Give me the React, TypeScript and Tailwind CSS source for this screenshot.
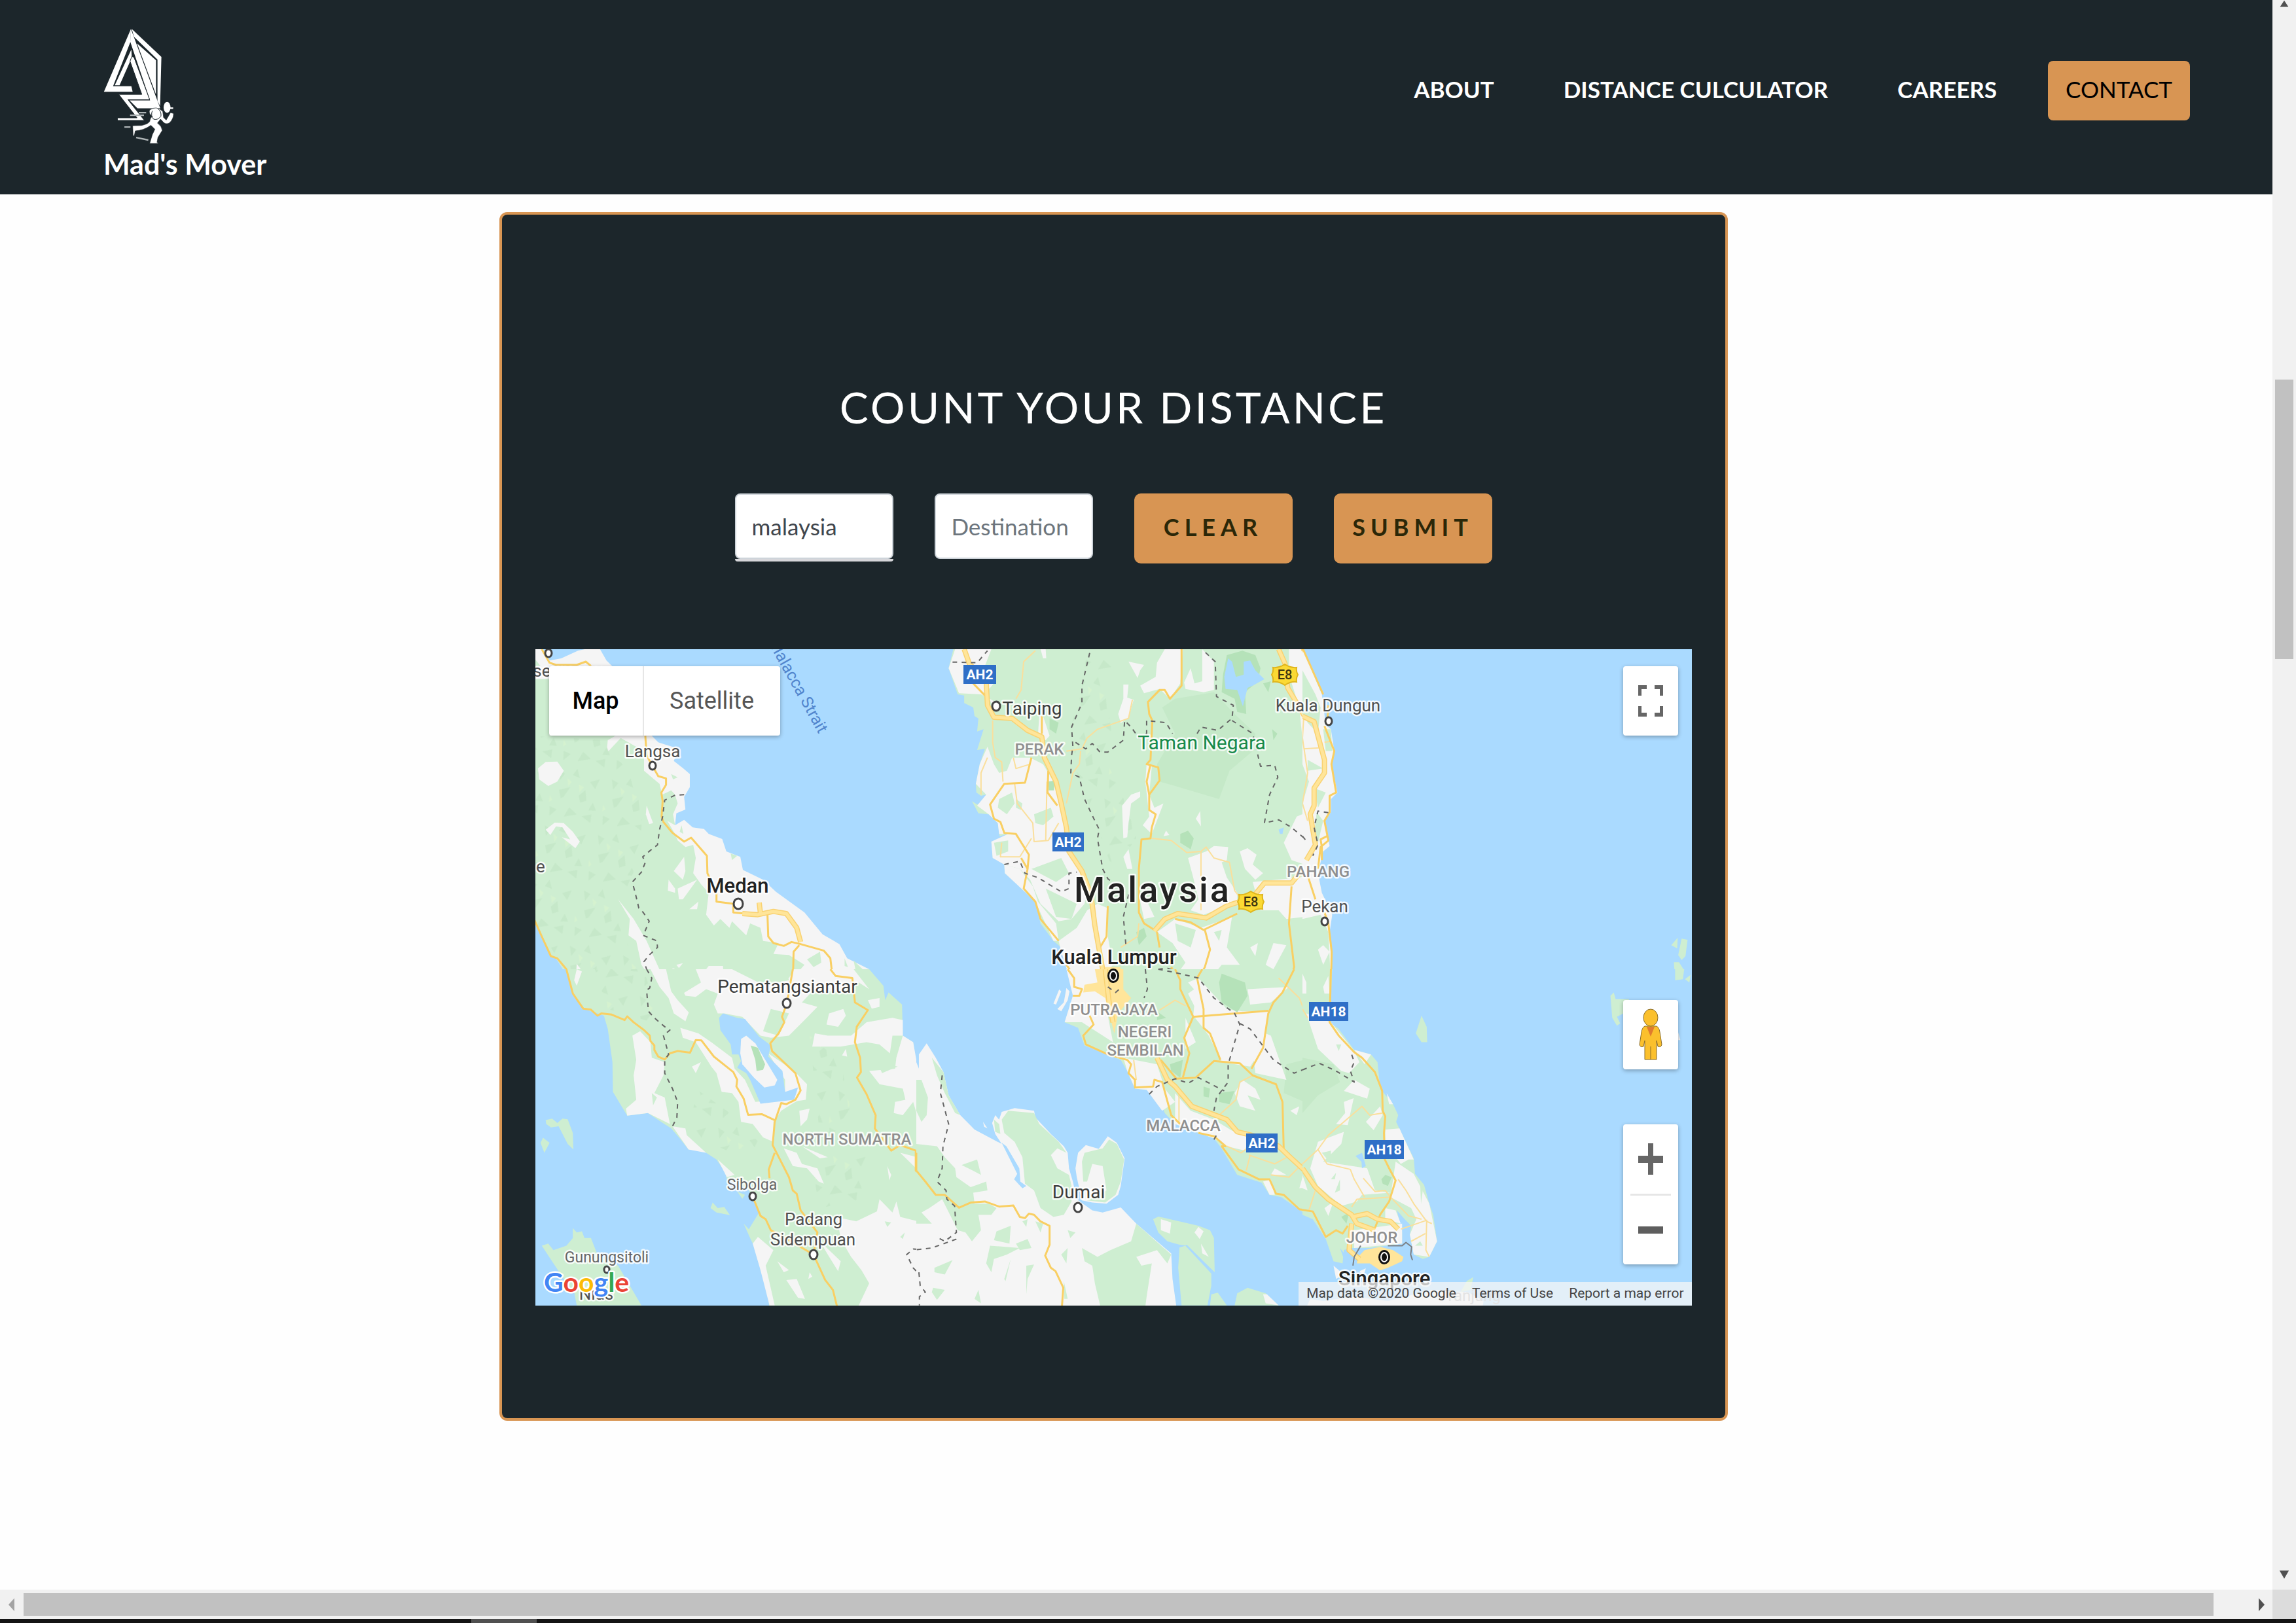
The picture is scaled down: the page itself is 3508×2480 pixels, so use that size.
import React from "react";

type Layer = [fill: string, shapes: string[]];

interface Sheet {
  x: number;
  y: number;
  height: number;
  span: number;
  layers: Layer[];
  minor: string[];
  roads: string[];
  motorways: string[];
  borders: string[];
  strait?: string[];
}

const LAND = "#f5f5f5";
const GREEN = "#ceeed1";
const SHADE = "#c5e9c8";
const FOREST = "#b5e2b9";
const WATER = "#aadaff";
const URBAN = "#ffe59a";
const RELIEF = "url(#relief)";

const sheets: Sheet[] = [
  {
    x: -8, y: -11, height: 520, span: 1560,
    layers: [
      [LAND, ["0,0 50,33 75,85 120,75 185,40 230,28 270,33 295,85 325,120 340,200 470,430 495,460 575,490 555,545 592,580 617,605 617,665 595,710 600,768 565,785 560,840 595,815 628,850 672,857 690,880 742,903 758,960 812,985 822,1045 900,1090 950,1145 1060,1240 1130,1340 1195,1385 1225,1450 1310,1500 1355,1568 165,1568 100,1450 80,1440 45,1350 0,1230"]],
      [GREEN, [
        "0,170 75,170 75,430 330,430 300,450 295,510 350,440 440,500 440,590 500,650 510,700 545,680 560,700 570,740 552,790 560,840 530,820 560,880 570,910 600,940 630,930 640,990 630,1060 660,1110 690,1150 680,1250 710,1300 735,1270 770,1310 780,1280 835,1345 850,1290 890,1310 900,1370 960,1380 940,1430 1000,1435 1060,1480 1030,1520 1000,1560 750,1560 745,1485 690,1485 660,1530 600,1520 550,1495 560,1568 165,1568 100,1450 80,1440 45,1350 0,1230",
        "20,80 40,110 20,110", "545,605 570,620 552,630", "585,840 592,880 578,870", "775,970 800,980 780,1000", "1070,1455 1120,1420 1125,1470 1095,1490", "1215,1450 1228,1490 1215,1485", "1250,1460 1285,1500 1260,1520", "1300,1530 1320,1510 1350,1568 1310,1568",
      ]],
      [RELIEF, ["0,430 290,450 440,700 420,1000 360,1160 300,1180 420,1500 160,1560 0,1240"]],
      [LAND, [
        "30,580 60,550 105,548 130,590 105,640 70,660 35,630", "60,860 95,828 130,830 165,870 192,915 175,945 122,895 155,905 125,850 100,845 78,885",
        "340,1180 400,1270 450,1370 525,1568 480,1568 430,1480 410,1370 380,1345 385,1270", "450,750 475,830 460,835 447,790",
        "555,1050 595,985 600,1050 590,1090", "535,1090 560,1130 560,1150 532,1140", "570,1130 645,1090 590,1180 575,1180", "615,1225 650,1190 645,1225", "180,1475 202,1510 190,1568 175,1568", "565,1480 590,1472 575,1495",
      ]],
    ],
    minor: [],
    roads: [
      "45,33 75,95 100,105 180,105 215,90 235,110",
      "445,430 450,520 472,567 495,615 525,625 525,655 507,690 512,730 508,800 515,825 550,875 595,915 622,897 683,980 685,1060 720,1150 720,1190 785,1200 785,1240 830,1245",
      "917,1250 920,1350 940,1380 980,1393 1010,1375 1045,1385 1135,1415 1160,1450 1165,1500 1200,1540 1245,1540",
      "1040,1390 1018,1420 1015,1568", "0,1230 45,1350 80,1440 105,1450 140,1500 165,1568",
    ],
    motorways: ["820,1245 880,1250 940,1235 990,1245 1030,1310 1045,1375", "885,1195 890,1245"],
    borders: ["595,700 560,702 520,725 512,800 500,860 492,930 465,955 435,985 445,1010 430,1055 395,1100 410,1170 420,1220 437,1240 460,1280 437,1345 490,1370 492,1400 460,1435 440,1465 450,1500 470,1560"],
  },
  {
    x: -8, y: 489, height: 530, span: 1568,
    layers: [
      [GREEN, [
        "140,0 1310,0 1365,75 1372,140 1385,105 1437,160 1440,300 1480,330 1490,420 1502,455 1502,385 1520,340 1545,345 1568,385 1568,1568 925,1568 920,1450 890,1360 885,1300 850,1215 825,1150 845,1175 882,1105 870,1050 840,990 760,950 755,920 720,860 680,830 640,812 612,815 575,760 545,720 455,650 375,662 320,555 318,420 300,270 285,210 210,180 165,110",
        "60,682 85,675 105,695 125,675 145,678 165,740 167,815 145,790 110,710 80,715 62,700", "40,785 50,762 75,785 55,830", "697,1080 705,1055 725,1080 750,1075 772,1112 720,1100", "800,1005 830,1020 820,1038",
        "165,1170 180,1190 200,1185 210,1215 235,1215 260,1290 340,1340 390,1440 430,1520 180,1520 170,1460 130,1400 90,1330 45,1250 70,1240 90,1270 140,1250 165,1215",
      ]],
      [RELIEF, ["250,0 440,0 500,250 300,180", "640,540 760,640 900,800 760,820 620,740", "1080,300 1200,420 1250,700 1120,760", "1080,850 1300,840 1280,1040 1120,1080"]],
      [LAND, [
        "180,0 200,10 180,75 170,50", "465,0 525,0 545,100 570,140 613,195 600,235 555,200 535,130 500,80",
        "550,0 600,120 640,125 680,90 725,110 710,160 725,200 750,200 820,215 890,300 930,310 1000,300 1060,230 1110,170 1050,150 1090,100 1200,100 1270,60 1310,90 1250,0 1020,0 1000,40 820,0 640,0",
        "395,300 425,280 465,330 470,400 520,420 515,480 480,560 520,580 540,700 455,650 375,662 370,630 410,590 400,480 410,410",
        "580,265 650,290 700,330 780,400 790,450 830,500 870,600 970,590 1040,590 1010,610 970,640 940,690 940,780 900,760 860,700 815,690 805,600 780,560 740,555 720,470 700,440 640,330 590,310",
        "920,380 1020,460 1070,520 1065,590 1010,600 985,560 985,500",
        "1090,350 1100,290 1150,300 1240,300 1300,240 1400,220 1440,230 1440,300 1400,300 1390,380 1350,340 1300,330 1200,350",
        "1145,250 1155,200 1210,180 1220,210 1190,260", "1305,140 1350,130 1350,170 1320,178",
        "1440,300 1480,330 1500,460 1568,560 1568,810 1520,810 1505,700 1480,600 1440,660 1405,650 1410,600 1450,590 1440,540 1350,520 1310,460 1410,450 1415,400",
        "1505,400 1530,340 1568,385 1568,440", "1040,640 1080,630 1070,680 1045,710", "980,810 1030,830 1050,880 1110,900 1135,970 1115,960 1070,900 1015,890", "1050,800 1150,850 1120,855", "1430,830 1530,860 1500,910", "1380,890 1395,930 1388,955",
        "1180,1120 1260,1140 1340,1095 1350,1040 1400,1100 1415,1050 1430,1120 1568,1160 1568,1568 1250,1568 1310,1420 1280,1360 1240,1300 1200,1220 1190,1150",
        "880,1210 940,1270 910,1340 945,1520 925,1520 890,1360 860,1240", "955,1320 1000,1360 980,1370", "990,1405 1030,1400 1062,1490 1035,1485", "1120,1230 1200,1320 1190,1365 1150,1290", "1080,1370 1090,1390 1075,1400",
        "725,860 790,930 760,940", "550,710 600,720 605,750 680,830 612,815", "625,440 660,420 640,470", "1205,390 1220,360 1225,395", "1500,1000 1568,1020 1568,1070",
      ]],
      [GREEN, ["545,0 640,0 660,60 590,110", "780,0 990,0 1000,50 900,70", "930,180 1000,200 960,300 900,280", "1430,1210 1448,1190 1440,1220", "1370,1140 1395,1145 1380,1165", "1340,420 1420,440 1360,470", "470,560 490,580 475,615"]],
      [WATER, ["730,220 745,200 800,220 830,225 885,305 930,345 920,395 975,460 985,555 1035,535 1020,590 890,608 850,500 835,470 800,445 815,415 805,385 780,385 775,340 735,275"]],
      [LAND, ["815,315 835,300 870,335 955,500 945,525 905,535 865,490 820,430 812,380"]],
      [FOREST, ["852,345 880,355 908,430 900,455 875,460 870,410"]],
    ],
    minor: [],
    roads: [
      "140,0 165,110 205,178 235,183 260,210 275,200 315,205 365,230 375,213 400,240 440,275 462,300 465,325 480,345 480,365 495,395 520,408 540,380 570,370 618,377 640,320 662,322 710,395 785,465 800,500 797,530 825,585 842,658 895,655 945,682",
      "1015,0 992,155 973,215 982,240 960,290 928,335 935,370 1025,470 1045,548 1025,590 990,610 970,605 945,690 937,795 1000,940 1015,1000 1030,1015 1045,1090 1110,1190 1095,1290 1140,1405 1170,1450 1195,1568",
      "945,830 922,905 925,945", "860,1028 890,1115 910,1130 930,1180 1000,1225 1095,1290",
      "1160,0 1180,30 1245,40 1255,150 1305,185 1262,260 1255,330 1275,400 1278,465 1263,490 1300,565 1335,660 1332,720 1395,820 1430,795 1490,820 1490,910 1525,950 1535,990 1568,1020",
    ],
    motorways: [],
    borders: [
      "450,0 470,40 462,85 450,95 457,190 480,220 520,260 540,275 515,300 535,385 520,410 520,470 550,540 570,600 567,670 545,722",
      "1568,1262 1530,1268 1480,1265 1455,1290 1480,1350 1500,1375 1505,1440 1525,1460 1505,1480 1508,1520",
    ],
  },
  {
    x: 582, y: -11, height: 520, span: 1560,
    layers: [
      [GREEN, ["150,0 125,120 160,240 185,245 185,280 220,300 225,340 240,350 235,410 260,400 235,495 265,490 245,560 230,650 232,690 250,705 270,700 265,735 235,745 215,730 240,785 280,790 315,830 322,890 355,880 310,915 290,915 295,985 340,1020 342,1060 410,1130 460,1190 480,1290 530,1370 560,1400 580,1480 600,1568 1568,1568 1568,240 1535,130 1480,0"]],
      [SHADE, ["950,300 1000,260 1150,230 1230,330 1310,420 1300,500 1210,590 1170,720 1000,660 940,640 930,560 1000,420"]],
      [RELIEF, ["560,40 660,40 640,200 600,380 620,600 700,850 760,1050 850,900 780,600 740,300 760,40"]],
      [LAND, [
        "150,33 290,33 265,110 310,105 300,190 270,230 290,280 330,290 250,240 165,235 125,120",
        "275,480 300,560 320,600 350,590 370,530 440,530 490,560 530,640 560,740 570,840 600,960 640,1030 660,1150 650,1200 600,1270 550,1280 480,1200 440,1090 400,1040 340,1020 295,990 290,915 355,880 320,880 315,830 280,790 235,750 270,700 230,650 245,560",
        "340,1020 400,1040 450,1120 470,1190 540,1290 550,1370 530,1370 460,1190 342,1060",
        "550,1370 620,1310 660,1230 700,1200 740,1220 740,1350 760,1480 700,1568 600,1568 560,1420",
        "475,340 490,340 515,430 500,450 470,430", "780,330 800,260 800,195 820,195 815,255 840,265 820,345 790,372", "820,90 880,105 865,130 855,165",
        "865,200 925,160 930,95 960,33 1030,33 1020,190 980,260 940,215 880,235", "1035,185 1060,120 1075,190 1105,180 1105,33 1150,90 1150,220 1110,230 1040,215",
        "795,750 830,700 865,685 865,710 830,740 820,830 815,895 800,900", "890,560 910,570 900,700 920,760 955,740 910,880 875,840 900,800 885,640", "1080,810 1097,775 1100,845", "955,890 965,865 978,885",
        "1050,990 1120,960 1150,935 1205,940 1200,1000 1180,1010 1200,1080 1240,1150 1240,1200 1180,1220 1110,1250 1060,1230 1090,1180 1070,1080",
        "1250,960 1280,945 1315,975 1300,1020 1340,1060 1310,1090 1270,1040", "1420,920 1470,800 1510,780 1530,850 1540,950 1500,1020 1450,1000",
        "1300,1100 1480,1080 1568,1050 1568,1250 1430,1270 1400,1230 1330,1230", "930,1330 1000,1270 1100,1310 1220,1260 1200,1400 1250,1480 1180,1480 1120,1568 980,1568 1040,1470 990,1380",
        "1290,1400 1320,1380 1310,1440", "1350,1480 1380,1380 1430,1390 1380,1500", "1440,33 1490,33 1568,260 1568,600 1520,650 1500,560 1490,420 1480,300 1440,150", "800,985 820,950 835,1040 815,1040", "480,33 500,33 502,75 490,75", "860,1160 880,1160 920,1260 880,1270",
      ]],
      [GREEN, ["320,720 370,690 380,740 350,790 315,760", "385,720 410,740 405,770 385,760", "455,790 520,760 530,800 490,840 460,830", "300,920 355,910 355,960 310,980", "445,1040 560,990 590,1060 540,1100", "1525,250 1560,300 1560,500 1520,480", "500,1130 620,1200 600,1270 540,1260", "1000,1290 1080,1320 1060,1400 1010,1370", "1150,1330 1180,1320 1170,1370"]],
      [FOREST, ["1200,60 1260,40 1310,60 1330,120 1320,180 1270,230 1275,330 1240,320 1230,260 1180,230 1185,150", "1020,880 1050,865 1072,900 1060,950 1020,920", "515,350 550,370 540,420 515,400", "1340,190 1370,180 1360,230", "1375,400 1395,420 1380,450", "850,1330 880,1310 890,1350 860,1390", "1170,1530 1210,1510 1220,1568 1170,1568", "510,640 535,635 532,680 512,680"]],
      [WATER, ["1205,75 1220,90 1235,160 1265,150 1265,90 1290,85 1310,130 1345,170 1300,200 1280,210 1262,295 1240,220 1195,215 1190,160", "1400,860 1420,850 1415,880 1405,880"]],
      [URBAN, ["690,1568 715,1490 790,1490 790,1568"]],
    ],
    minor: [
      "460,40 415,90 405,220 385,260", "835,265 820,350 700,400 660,440 640,490 580,500", "635,500 630,560 605,600 580,740", "295,360 295,460 305,530 330,550 335,640", "380,650 390,740 450,830 455,915 510,910 550,830", "275,530 250,600 250,700",
      "910,900 985,910 1045,965 1100,960 1120,940 1150,990 1210,1010 1230,1140 1250,1170", "1100,960 1100,1230", "860,1290 855,1350 790,1400", "330,920 325,985 400,985 445,900", "375,530 385,580 440,560", "505,640 500,910", "1500,345 1500,500 1515,600 1500,720 1520,820",
    ],
    roads: [
      "220,190 265,245", "1025,33 1025,200 980,260 960,220 940,220 895,275 900,330 912,360 905,540 890,560 935,575 940,635 900,700 900,770 925,790 910,850 905,900 870,905 860,1040 860,1240 880,1290 920,1320", "905,560 890,640 900,700",
      "445,530 420,645 340,650 285,745 300,810 325,825 340,875 385,880 435,975 430,1040 415,1130 460,1190 480,1270 550,1370", "510,590 507,690 545,750", "485,340 485,420", "930,1330 940,1400", "1000,1270 1060,1285 1110,1320 1240,1245", "1115,1320 1135,1410 1115,1490 1080,1568", "1450,1120 1440,1290 1460,1490 1440,1568", "740,1210 735,1350 705,1410", "1490,33 1568,245", "1515,1090 1540,1180", "405,990 430,1040", "580,1480 610,1530 610,1568", "985,1490 1025,1568",
    ],
    motorways: [
      "185,33 205,100 270,180 275,290 300,345 370,350 430,405 485,435 495,530 540,640 560,740 580,850 590,960 640,1050 675,1160 690,1300 705,1400 730,1568",
      "1400,33 1425,100 1435,210 1500,340 1545,370 1568,480", "920,1325 960,1270 1010,1245 1120,1265 1200,1210 1300,1170 1345,1105 1450,1105 1540,975 1530,800 1545,660 1568,630",
    ],
    borders: [
      "670,50 640,200 640,280 600,390 605,480 600,520 597,600 630,620 650,720 690,820 707,860 700,900 720,1040 740,1085 820,1160 800,1260 810,1390",
      "615,460 655,490 680,465 710,505 740,505 800,450 805,360 830,390 860,440 890,420 890,360 965,370 990,420",
      "1085,420 1100,390 1165,405 1220,350 1225,290 1160,250 1155,90 1110,40", "1220,360 1300,420 1330,570 1385,565 1397,620 1365,700 1345,830 1400,815 1450,850 1510,910 1540,980 1555,860 1550,780",
      "340,1020 400,1005 420,1060 470,1080 560,1145 590,1130 590,1060 620,1055", "885,1500 890,1560", "935,1500 970,1495 1090,1545", "140,92 235,95 275,40",
    ],
  },
  {
    x: 582, y: 489, height: 530, span: 1568,
    layers: [
      [LAND, [
        "0,420 10,450 10,385 40,335 75,400 105,465 125,570 170,660 225,725 330,790 305,745 293,695 305,660 320,680 330,645 380,628 455,640 460,670 520,745 570,800 585,830 590,900 605,960 620,1040 680,1090 720,1100 790,1077 850,1150 985,1285 990,1400 1010,1568 0,1568",
        "620,940 615,900 625,830 655,795 705,812 740,755 775,785 805,855 790,980 780,1020 735,1060 680,1055 640,1045", "530,155 552,92 560,100 540,160", "570,150 580,85 592,100 585,140 560,190 545,180", "258,690 275,720 262,712",
      ]],
      [GREEN, [
        "580,0 605,80 605,120 590,205 573,240 625,265 650,345 735,385 790,410 815,460 845,540 890,545 945,600 960,650 1000,700 1090,740 1150,765 1180,810 1240,930 1335,965 1365,1020 1410,1030 1520,1120 1568,1180 1568,0",
        "915,1130 935,1118 1090,1160 1135,1180 1150,1215 1153,1370 1045,1250 1015,1245 970,1230 935,1190", "1017,1258 1040,1250 1140,1375 1140,1430 1125,1520 1025,1520 1012,1350", "1140,1470 1165,1462 1200,1520 1135,1520", "1230,1520 1240,1465 1280,1440 1350,1465 1400,1520",
        "0,500 20,500 45,580 40,660 20,690 0,640", "60,400 105,465 125,570 170,660 150,650 110,560 80,480", "0,790 80,800 110,850 150,900 155,940 210,985 270,960 275,1000 220,1010 225,1060 280,1060 310,1080 290,1110 240,1110 250,1180 215,1230 190,1190 160,1180 100,1040 50,1080 20,1100 60,1150 0,1150",
        "175,885 235,860 250,930 210,905", "330,680 355,640 455,650 475,700 550,780 580,830 520,840 545,900 590,930 600,980 600,1050 570,1110 530,1120 480,1080 455,1000 420,970 410,850 380,780 340,740", "300,680 320,700 325,745 305,735",
        "650,830 720,810 745,770 775,790 803,860 790,960 770,1020 730,1055 660,1045 735,1000 720,890 680,880 660,960 645,960 640,870",
        "640,1260 700,1300 750,1270 830,1230 850,1150 985,1290 970,1330 930,1270 850,1300 870,1340 910,1330 890,1480 880,1568 720,1568 690,1420 680,1340 650,1320",
        "285,1250 400,1260 350,1290 300,1310 290,1370 270,1330", "430,1220 445,1260 400,1270 385,1240", "310,1185 365,1160 360,1240 300,1225", "340,1400 365,1310 345,1410", "425,1340 455,1335 430,1400 425,1470", "70,1350 140,1315 110,1380 70,1370", "65,1440 110,1450 80,1495 60,1460", "585,1180 615,1190 595,1215", "560,1290 585,1260 580,1330", "570,1410 585,1490 572,1490", "240,1450 250,1510 225,1490", "410,1140 430,1130 425,1165", "460,1140 490,1150 480,1190",
      ]],
      [SHADE, ["1430,430 1568,390 1568,640 1500,600 1420,560"]],
      [LAND, [
        "1050,60 1090,40 1200,180 1260,190 1360,190 1340,350 1290,440 1180,420 1130,300 1105,260 1070,210 1080,100", "1280,90 1440,80 1370,150 1290,160", "580,0 690,0 780,200 740,210 760,330 640,240 573,240 605,120",
        "800,400 930,430 960,540 1000,600 950,640 890,545 845,540 815,460", "1000,560 1060,640 1150,680 1220,730 1290,740 1270,820 1200,800 1150,765 1000,700", "1260,500 1310,540 1330,590 1280,570 1310,640 1250,620 1230,560",
        "1340,960 1370,950 1385,1020 1365,1020", "1480,990 1495,930 1510,985", "1525,870 1568,790 1568,980", "1370,930 1385,900 1430,930", "1290,260 1370,300 1430,500 1310,470", "1445,640 1480,620 1470,660",
        "945,1130 985,1145 980,1195 945,1180", "1075,1190 1090,1165 1110,1185 1095,1220", "1100,1240 1130,1300 1105,1285", "1340,1470 1355,1470 1400,1520 1350,1510", "1050,110 1110,60 1080,180", "1040,220 1080,330 1040,360", "520,840 545,810 580,830 590,910 550,890",
      ]],
      [FOREST, ["1180,20 1270,60 1280,120 1240,195 1180,150 1170,60", "980,430 1030,410 1020,490 985,460", "1170,560 1230,550 1210,610 1170,600", "930,190 965,220 930,230", "1110,530 1135,540 1130,580 1110,575"]],
      [WATER, ["330,785 348,800 398,900 402,960 425,980 410,990 378,950 390,925", "1040,1248 1046,1246 1150,1368 1142,1378"]],
      [URBAN, ["650,70 700,60 690,0 800,0 800,90 830,130 780,200 765,290 730,130 690,100 645,105"]],
    ],
    minor: ["940,185 1000,140 1040,165", "1285,840 1385,880 1440,845", "1400,40 1480,130 1510,220", "1170,660 1235,590 1250,510 1300,480", "1520,1090 1550,980", "1370,930 1440,940 1568,790", "1015,560 1015,690", "1200,800 1255,830 1290,800", "1275,910 1290,840", "840,410 850,500"],
    roads: [
      "585,0 610,40 610,80 640,90 630,120 605,120", "670,210 685,250 645,300 655,340 740,385 815,410 830,430 820,470 845,500 845,535 915,530 920,500 950,510 985,660 1020,700", "1000,0 1020,50 1020,90 1070,215 1035,310 1055,380 1030,490",
      "1105,0 1085,40 1110,180 1110,265 1135,290 1175,410", "1070,215 1360,188", "1460,0 1415,105 1380,150 1360,200 1340,355 1295,450", "945,410 1005,495 1080,490 1150,415 1250,425 1300,480 1390,520 1415,600 1420,830", "1090,740 1150,755 1195,800 1180,800 1245,905 1325,950 1365,950 1390,1015 1420,1020 1480,1085 1530,1095 1568,1180",
      "0,830 0,910 35,960 75,1020 110,1020 165,1078 210,1055 265,1050 320,1073 375,1068 400,1120 420,1125 435,1105 455,1110 480,1140 515,1160 515,1245 498,1295 520,1350 538,1365 568,1440 560,1568",
    ],
    motorways: ["730,0 745,150 760,240", "930,400 970,500 1000,530 1065,620 1200,680 1240,735 1330,760 1400,800 1440,845 1510,920 1568,1010"],
    borders: [
      "100,480 93,560 125,700 103,800 100,900 80,960 115,1000 118,1040 148,1070 155,1190 110,1230 85,1215", "155,1220 60,1260 0,1268", "885,0 893,90 880,130", "935,0 1000,15 1090,40 1150,130 1230,200 1250,250 1205,430 1205,510 1160,580 1150,640", "1250,245 1290,270 1380,410 1460,470 1568,420", "900,565 930,530 1000,495 1050,515 1090,490 1190,550", "1150,770 1170,730", "10,1370 15,1430 35,1460 12,1480 12,1520", "740,80 770,105 795,80",
    ],
  },
  {
    x: 1172, y: -11, height: 520, span: 1560,
    layers: [
      [LAND, ["-10,0 75,240 90,380 110,400 123,500 112,560 135,690 110,720 110,780 85,820 105,935 80,960 60,1060 75,1150 115,1250 105,1330 115,1568 0,1568"]],
      [GREEN, [
        "0,130 50,240 70,300 60,420 20,370 0,330", "80,400 110,400 115,500 90,500", "20,540 80,580 20,590", "45,670 90,690 60,760", "55,780 80,820 60,920 45,880", "0,560 25,640 0,740", "0,1270 70,1250 100,1330 110,1568 0,1568",
        "1425,1390 1450,1355 1448,1405", "1465,1360 1488,1365 1480,1440 1465,1458 1452,1435", "1435,1468 1455,1468 1480,1515 1455,1568 1440,1550", "1480,1545 1500,1525 1500,1568",
      ]],
      [LAND, ["60,1410 80,1390 105,1420 80,1480", "90,1530 105,1568 85,1568", "0,1510 15,1530 15,1568 0,1568"]],
    ],
    minor: ["5,345 0,440 20,600 0,740 20,820", "5,490 65,485", "85,460 110,455"],
    roads: ["-10,0 80,240", "95,380 100,290", "85,385 123,500 112,560 130,690 105,705 105,780 85,820 100,910 70,940 60,1040", "95,890 70,905 75,940 75,1000", "20,1070 50,1180", "85,1240 100,1290 113,1420 110,1568"],
    motorways: ["0,340 45,365 85,540 85,600 45,670 45,750 30,790 50,930 15,1000"],
    borders: ["100,782 60,775 45,850 60,930 40,980", "0,890 20,920"],
  },
  {
    x: 1172, y: 489, height: 530, span: 1568,
    layers: [
      [GREEN, [
        "0,0 115,0 105,240 140,270 200,365 265,385 290,420 300,540 350,610 370,660 362,690 395,770 430,855 435,925 470,975 490,1060 505,1110 520,1230 490,1300 465,1310 430,1290 415,1200 420,1160 395,1130 365,1090 385,1190 385,1240 260,1260 180,1260 160,1270 155,1330 120,1320 90,1220 40,1130 0,1110",
        "438,290 460,210 480,260 482,330 460,330", "1190,120 1203,105 1210,135 1262,135 1240,200 1215,215 1228,245 1215,255 1197,220", "1440,0 1475,0 1470,45 1440,50", "1478,45 1500,25 1495,60", "635,1410 660,1392 650,1450 610,1460",
      ]],
      [SHADE, ["0,400 120,430 145,510 60,570 0,650"]],
      [LAND, [
        "0,20 15,60 15,110 0,110", "80,80 100,30 105,110 85,110", "15,200 110,240 200,370 220,420 180,470 150,460 60,360 40,290", "200,365 265,385 240,430", "160,550 200,500 260,540 250,585", "160,600 198,583 175,705 130,700 165,650", "245,690 300,620 310,660 275,728", "320,725 375,720 430,860 410,860 380,880 320,790",
        "60,780 160,735 150,790 80,870 250,900 280,1000 340,1010 230,1020 210,1050 150,1070 60,980 30,900", "360,870 430,925 490,1060 520,1230 490,1300 430,1290 415,1200 440,1130 420,1080 340,1030", "85,1080 120,1050 100,1115", "200,1180 385,1150 385,1240 200,1260", "320,1080 360,1090 380,1150 320,1130", "1452,285 1460,320 1452,320", "120,1340 160,1380 130,1400", "325,560 350,610 335,610", "0,930 20,1000 0,990",
      ]],
      [GREEN, ["110,950 130,920 125,950", "130,340 150,340 140,370", "75,830 110,820 110,880", "125,1010 145,950 145,1000", "455,975 465,1000 458,1060", "435,1250 455,1230 465,1250"]],
      [FOREST, ["305,950 320,930 345,940 330,980 310,970", "150,1120 180,1100 170,1150"]],
      [WATER, ["205,845 230,830 245,890 230,900 228,870", "145,1260 165,1290 178,1300 160,1310"]],
      [URBAN, ["215,1300 240,1270 300,1255 350,1270 390,1300 385,1320 330,1350 300,1362 260,1330 210,1330"]],
      [LAND, ["0,1568 30,1490 80,1500 200,1480 330,1500 500,1450 640,1460 700,1500 690,1568", "220,1365 245,1352 235,1390"]],
    ],
    minor: ["0,880 60,815 100,750 160,690 230,620 260,660 310,650", "60,815 95,880 185,905 200,950 240,1030", "235,945 280,1005 320,1000 340,1030 410,1115 460,1130", "370,950 400,1000 430,1060 480,1140 500,1150", "380,1175 480,1135 477,1270 490,1300", "475,1195 420,1230", "50,1000 25,1090", "190,1075 210,1040 340,1030", "0,180 20,220"],
    roads: ["110,0 105,240 140,300 200,375 230,400 280,465 308,550 310,640 320,665 315,740 318,860 335,900 360,955 335,1050 300,1110 280,1170", "0,1088 40,1095 90,1210 130,1180 155,1195 175,1160"],
    motorways: ["0,900 50,985 100,1040 190,1110 210,1150 280,1180", "190,1120 250,1105 290,1130 340,1140 370,1175", "190,1150 180,1270 220,1310"],
    borders: ["0,455 65,425 130,460 200,510 185,460 200,420 190,385 200,370"],
    strait: ["195,1340 200,1300 225,1250", "330,1250 385,1250 400,1235 422,1255 418,1290 425,1315"],
  },
];

function Lines({ lines, color, width, dash }: { lines: string[]; color: string; width: number; dash?: string }) {
  return (
    <g fill="none" stroke={color} strokeWidth={width} strokeLinejoin="round" strokeDasharray={dash}>
      {lines.map((points) => (
        <polyline key={points} points={points} vectorEffect="non-scaling-stroke" />
      ))}
    </g>
  );
}

function MapSheet({ sheet }: { sheet: Sheet }) {
  return (
    <svg x={sheet.x} y={sheet.y} width={620} height={sheet.height} viewBox={`0 0 1568 ${sheet.span}`} preserveAspectRatio="none">
      <rect width="1568" height="1568" fill={WATER} />
      {sheet.layers.map(([fill, shapes], i) => (
        <g key={i} fill={fill}>
          {shapes.map((points) => (
            <polygon key={points} points={points} />
          ))}
        </g>
      ))}
      <Lines lines={sheet.minor} color="#fadf9c" width={2} />
      <Lines lines={sheet.roads} color="#f9cf63" width={3} />
      <Lines lines={sheet.motorways} color="#f9d272" width={8} />
      <Lines lines={sheet.motorways} color="#ffe599" width={5} />
      <Lines lines={sheet.borders} color="#666666" width={2} dash="7 7" />
      {sheet.strait && <Lines lines={sheet.strait} color="#7c8085" width={2} />}
    </svg>
  );
}

type Kind = "country" | "capital" | "city" | "town" | "small" | "state" | "park";

const labels: [text: string, x: number, y: number, kind: Kind][] = [
  ["Langsa", 179, 165, "town"],
  ["Medan", 309, 372, "capital"],
  ["Pematangsiantar", 385, 525, "city"],
  ["NORTH SUMATRA", 476, 757, "state"],
  ["Sibolga", 331, 826, "small"],
  ["Padang", 425, 880, "town"],
  ["Sidempuan", 424, 911, "town"],
  ["Gunungsitoli", 109, 937, "small"],
  ["Nias", 93, 994, "town"],
  ["Taiping", 759, 100, "city"],
  ["PERAK", 770, 161, "state"],
  ["Taman Negara", 1018, 153, "park"],
  ["Kuala Dungun", 1211, 95, "town"],
  ["PAHANG", 1196, 348, "state"],
  ["Pekan", 1206, 402, "town"],
  ["Malaysia", 943, 386, "country"],
  ["Kuala Lumpur", 884, 481, "capital"],
  ["PUTRAJAYA", 884, 559, "state"],
  ["NEGERI", 931, 593, "state"],
  ["SEMBILAN", 932, 621, "state"],
  ["MALACCA", 990, 736, "state"],
  ["Dumai", 830, 839, "city"],
  ["JOHOR", 1278, 907, "state"],
  ["Singapore", 1297, 972, "capital"],
  ["Lhokseumawe", 24, 42, "town"],
  ["e", 8, 341, "town"],
];

const labelStyles: Record<Kind, string> = {
  country: "fill-[#222222] text-[54px] font-medium tracking-[3px]",
  capital: "fill-[#222222] text-[31px] font-medium",
  city: "fill-[#3c3c3c] text-[28px]",
  town: "fill-[#505050] text-[26px]",
  small: "fill-[#666666] text-[23px]",
  state: "fill-[#8f8f8f] text-[24px] font-medium",
  park: "fill-[#188a4b] text-[30px]",
};

const dots: [number, number, number][] = [
  [20, 6, 5], [179, 178, 5], [310, 389, 7], [384, 541, 6], [332, 836, 5], [425, 925, 6], [109, 948, 4],
  [704, 87, 6], [1212, 110, 5], [1206, 416, 5], [829, 853, 6],
];

const shields: [string, number, number, number][] = [
  ["AH2", 654, 24, 50], ["AH2", 790, 280, 48], ["AH2", 1086, 740, 48], ["AH18", 1182, 539, 60], ["AH18", 1267, 750, 60],
];

const googleLetters: [string, string][] = [
  ["G", "#4285f4"], ["o", "#ea4335"], ["o", "#fbbc05"], ["g", "#4285f4"], ["l", "#34a853"], ["e", "#ea4335"],
];

function MapCanvas() {
  return (
    <svg viewBox="0 0 1767 1003" className="block h-auto w-full font-['Roboto',sans-serif]" role="img" aria-label="Map of Malaysia">
      <defs>
        <pattern id="relief" width="210" height="260" patternUnits="userSpaceOnUse" patternTransform="rotate(12)" fill="#c6e8c9">
          <path d="M20 30l28 12-14 34zM90 10l18 40-30-8zM150 60l34-20-8 48zM40 120l40-22-16 50-10 8zM120 130l20-30 14 46-22 14zM180 150l20 34-30 4zM20 200l30 10-22 34zM95 190l36 26-48 20zM150 220l36-16 4 40z" />
          <path d="M60 60l20 14-8 22zM110 80l22 8-12 26zM10 150l14 20-10 12z" fill="#d5f2cf" />
        </pattern>
      </defs>
      {sheets.map((sheet) => (
        <MapSheet key={`${sheet.x} ${sheet.y}`} sheet={sheet} />
      ))}

      <g fill="#ffffff" stroke="#444444" strokeWidth="3">
        {dots.map(([x, y, r]) => (
          <ellipse key={`${x} ${y}`} cx={x} cy={y} rx={r} ry={r + 1} />
        ))}
      </g>
      {[[883, 499], [1297, 929]].map(([x, y]) => (
        <g key={x}>
          <ellipse cx={x} cy={y} rx="9" ry="11" fill="#111111" />
          <ellipse cx={x} cy={y} rx="5" ry="7" fill="none" stroke="#ffffff" strokeWidth="2" />
        </g>
      ))}

      {shields.map(([name, x, y, w]) => (
        <g key={`${x} ${y}`}>
          <rect x={x} y={y} width={w} height="29" fill="#2f6fc7" />
          <text x={x + w / 2} y={y + 22} textAnchor="middle" className="fill-white text-[21px] font-bold">{name}</text>
        </g>
      ))}
      {[[1125, 23], [1073, 370]].map(([x, y]) => (
        <g key={x}>
          <path d={`M${x + 2} ${y + 5}q9 1 18-5q9 6 18 5q-1 6 2 11q-3 5-2 11q-9-1-18 5q-9-6-18-5q1-6-2-11q3-5 2-11z`} fill="#fbd933" stroke="#dfb51c" strokeWidth="2" />
          <text x={x + 20} y={y + 23} textAnchor="middle" className="fill-[#3b3410] text-[20px] font-medium">E8</text>
        </g>
      ))}

      <g stroke="#ffffff" strokeOpacity="0.85" strokeWidth="5" strokeLinejoin="round" paintOrder="stroke" textAnchor="middle">
        {labels.map(([text, x, y, kind]) => (
          <text key={text} x={x} y={y} className={labelStyles[kind]}>{text}</text>
        ))}
      </g>
      <text transform="translate(433 130) rotate(61)" textAnchor="end" className="fill-[#5185cd] text-[25px]">Malacca Strait</text>
      <text x="1390" y="996" className="fill-[#aaaaaa] text-[24px]">Tanjung</text>

      <text x="13" y="982" stroke="#ffffff" strokeWidth="5" strokeLinejoin="round" paintOrder="stroke" className="font-['Lato',sans-serif] text-[41px] font-bold">
        {googleLetters.map(([letter, color], i) => (
          <tspan key={i} fill={color}>{letter}</tspan>
        ))}
      </text>
    </svg>
  );
}

function Pegman() {
  return (
    <svg viewBox="0 0 36 80" className="h-[80px] w-[36px]" fill="#fbc02d" stroke="#8a6d2a" strokeWidth="1">
      <path d="M9 27h18q4 2 5 9l3 19q-1 5-6 3l-2-9v29H9V49l-2 9q-5 2-6-3l3-19q1-7 5-9z" />
      <path d="M12 28h12l-6 15z" fill="#e07b2e" stroke="none" />
      <path d="M18 58v20" />
      <ellipse cx="18" cy="14" rx="11" ry="13" />
    </svg>
  );
}

function Logo() {
  return (
    <svg viewBox="84 70 324 535" className="h-[178px] w-[108px]" fill="#ffffff" aria-hidden="true">
      <path d="M210 74L86 362H218L212 337H128L208 132z" />
      <path d="M212 168L136 332H158L214 205z" />
      <path d="M210 74L207 132L298 402H204L240 438H345L334 410z" />
      <path d="M214 200L206 222L260 374H154L238 482H148V494H272L196 398H296L224 204z" stroke="#1c262b" strokeWidth="3" />
      <path d="M214 74L350 202L344 428L332 404V214L224 110z" />
      <path d="M238 140L325 217V374z" />
      <path d="M246 458H280M206 470H270M180 524H208M234 572L290 584" stroke="#aeb4b6" strokeWidth="7" />
      <ellipse cx="376" cy="434" rx="16" ry="25" />
      <path d="M388 434h16v7h-16z" />
      <path
        d="M296 446q30-22 60 6l4 28 12 12 20-34 14 4q0 26-20 44-20 10-34-12l-6-6-14 18q20 14 22 34l-20 32-4 22 6 6h-40l12-40 12-26-18-18q-34 24-72 26l-4 20-6 4-2-48 40-1q30-6 38-18 2-16 12-24-18-12-12-29z"
        stroke="#1c262b"
        strokeWidth="2"
      />
      <path d="M308 450q-8 22 6 38q20 6 34-14q2-22-12-32" fill="none" stroke="#1c262b" strokeWidth="3" />
    </svg>
  );
}

function Arrow({ d, className }: { d: string; className: string }) {
  return (
    <svg viewBox="0 0 16 20" className={className} aria-hidden="true">
      <path d={d} fill="currentColor" />
    </svg>
  );
}

const controlBox = "flex w-[84px] items-center justify-center rounded-[4px] bg-white shadow-[0_2px_6px_rgba(0,0,0,0.3)]";
const actionButton = "h-[107px] w-[242px] rounded-[10px] bg-[#d89553] pb-[6px] text-center text-[36px] font-bold tracking-[8px] text-[#2b2708]";
const textBox = "h-[100px] w-[242px] rounded-[8px] border-2 border-[#ced4da] bg-white pl-[24px] text-[35px] text-[#40464d] outline-none placeholder:text-[#6c757d]";

export default function App() {
  return (
    <div className="flex h-screen flex-col overflow-hidden bg-[#fefefe] font-['Lato',sans-serif]">
      <div className="flex min-h-0 flex-1">
        <div className="min-w-0 flex-1">
          <header className="flex items-start justify-between bg-[#1c262b] pr-[126px] pl-[158px]">
            <a href="#home" className="flex flex-col pt-[43px] pb-[16px] text-white">
              <Logo />
              <span className="text-[43px] leading-[60px] font-bold">Mad's Mover</span>
            </a>
            <nav className="mt-[93px] flex items-start text-[35px] leading-[86px] font-bold text-white">
              <a href="#about" className="mr-[106px]">ABOUT</a>
              <a href="#distance" className="mr-[106px]">DISTANCE CULCULATOR</a>
              <a href="#careers" className="mr-[78px]">CAREERS</a>
              <a href="#contact" className="h-[91px] w-[217px] rounded-[8px] bg-[#d89553] text-center font-normal text-black">CONTACT</a>
            </nav>
          </header>

          <main className="flex justify-center pt-[27px] pr-[70px]">
            <section id="distance" className="w-full max-w-[1877px] rounded-[12px] border-4 border-[#d89553] bg-[#1c262b] px-[51px] pt-[254px] pb-[172px]">
              <h1 className="text-center text-[66px] leading-[80px] tracking-[4px] text-white">COUNT YOUR DISTANCE</h1>

              <form className="mt-[92px] flex items-start justify-center gap-[63px]" onSubmit={(e) => e.preventDefault()}>
                <div className="h-[104px] rounded-b-[4px] border-b-4 border-[#d6d6da]">
                  <input aria-label="Origin" type="text" defaultValue="malaysia" className={textBox} />
                </div>
                <input aria-label="Destination" type="text" placeholder="Destination" className={textBox} />
                <button type="button" className={actionButton}>CLEAR</button>
                <button type="submit" className={actionButton}>SUBMIT</button>
              </form>

              <div className="relative mt-[131px] overflow-hidden font-['Roboto',sans-serif]">
                <MapCanvas />

                <div className="absolute top-[26px] left-[21px] flex h-[106px] rounded-[4px] bg-white text-[36px] shadow-[0_2px_6px_rgba(0,0,0,0.3)]">
                  <button type="button" className="w-[145px] border-r-2 border-[#e6e6e6] font-medium text-black">Map</button>
                  <button type="button" className="w-[208px] text-[#565656]">Satellite</button>
                </div>

                <button type="button" aria-label="Toggle fullscreen view" className={`${controlBox} absolute top-[26px] right-[21px] h-[106px]`}>
                  <svg viewBox="0 0 38 48" className="h-[48px] w-[38px]" fill="#666666">
                    <path d="M0 0h13v6H5v10H0zM25 0h13v16h-5V6h-8zM0 32h5v10h8v6H0zM33 32h5v16H25v-6h8z" />
                  </svg>
                </button>

                <div className="absolute right-[21px] bottom-[63px] flex flex-col gap-[84px]">
                  <button type="button" aria-label="Street View" className={`${controlBox} h-[106px]`}>
                    <Pegman />
                  </button>
                  <div className={`${controlBox} h-[214px] flex-col`}>
                    <button type="button" aria-label="Zoom in" className="flex w-full flex-1 items-center justify-center">
                      <svg viewBox="0 0 38 48" className="h-[48px] w-[38px]" fill="#666666">
                        <path d="M15 0h8v19h15v11H23v18h-8V30H0V19h15z" />
                      </svg>
                    </button>
                    <span className="h-[3px] w-[62px] bg-[#e6e6e6]" />
                    <button type="button" aria-label="Zoom out" className="flex w-full flex-1 items-center justify-center">
                      <span className="h-[11px] w-[38px] bg-[#5e5e5e]" />
                    </button>
                  </div>
                </div>

                <div className="absolute right-0 bottom-0 flex h-[36px] items-center gap-[24px] bg-[#f5f5f5]/75 pr-[12px] pl-[12px] text-[21px] text-[#444444]">
                  <span>Map data ©2020 Google</span>
                  <a href="#terms">Terms of Use</a>
                  <a href="#report">Report a map error</a>
                </div>
              </div>
            </section>
          </main>
        </div>

        <div className="flex w-[36px] flex-col items-center bg-[#f1f1f1]">
          <Arrow d="M0 13L8 1l8 12z" className="h-[16px] w-[16px] text-[#505050]" />
          <div className="mt-[564px] h-[427px] w-[28px] bg-[#c1c1c1]" />
          <Arrow d="M0 3h16L8 17z" className="mt-auto mb-[14px] h-[18px] w-[16px] text-[#505050]" />
        </div>
      </div>

      <div className="flex h-[45px] items-center bg-[#f1f1f1]">
        <Arrow d="M14 0v20L5 10z" className="ml-[8px] h-[20px] w-[16px] text-[#a3a3a3]" />
        <div className="ml-[12px] h-[35px] flex-1 bg-[#c1c1c1]" />
        <Arrow d="M3 0l9 10-9 10z" className="ml-[66px] h-[20px] w-[16px] text-[#505050]" />
        <div className="ml-[8px] h-full w-[36px] bg-[#dcdcdc]" />
      </div>
      <div className="h-[6px] bg-[#141414] pl-[720px]">
        <div className="h-full w-[100px] bg-[#505050]" />
      </div>
    </div>
  );
}
